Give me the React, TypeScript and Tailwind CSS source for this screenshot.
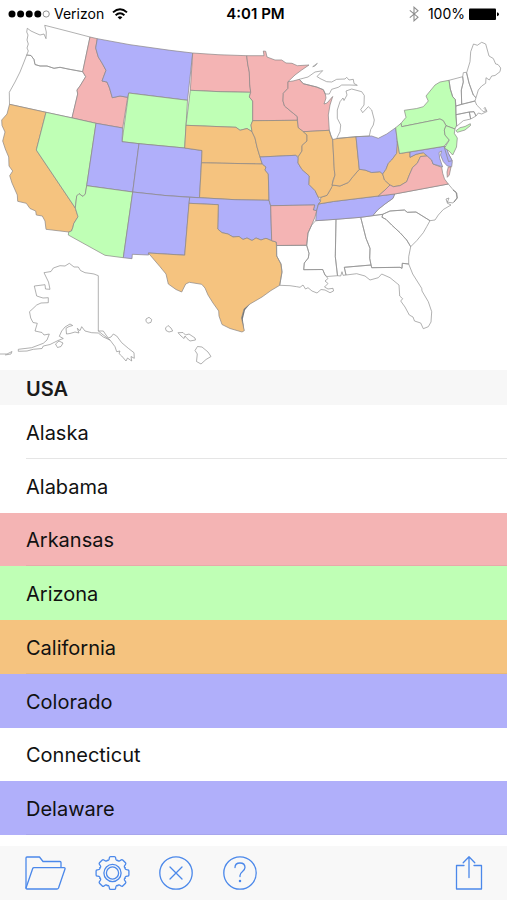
import type { ReactNode } from "react";

const PINK = "#f4b4b4";
const GREEN = "#bfffb5";
const ORANGE = "#f5c37f";
const PURPLE = "#b0affa";

type Shape = { id: string; d: string; fill?: string };

const shapes: Shape[] = [
  { id: "WA", d: "M27.3 28.3L31 31 36 33.3 40 35 44 34 46 38.7 46.3 32 44.7 25.3 67 31 90 37 82.7 71.7 68 69 60 67.3 54 68.3 47 66 40 66 35 64.5 34 59.5 31 55.5 26.7 55 28.3 51 27 48 28.3 44 27 40 28 35 26.7 32Z" },
  { id: "OR", d: "M26.7 55L24 62 20 72 15 82 9.3 92.3 9.5 104.3 46 112.3 72 117.9 77.7 94 77 90 80 86 85.7 76.7 82.7 71.7 68 69 60 67.3 54 68.3 47 66 40 66 35 64.5 34 59.5 31 55.5Z" },
  { id: "ID", fill: PINK, d: "M90 37L97.3 38.7 95.7 48 98.3 57 102 63 106 70.3 102 81 107 82 109.5 88 112.3 97.7 120 96 127.7 97.3 122.7 128 96 123.3 72 117.9 77.7 94 77 90 80 86 85.7 76.7 82.7 71.7Z" },
  { id: "MT", fill: PURPLE, d: "M97.3 38.7L130 44.7 170 50.3 192.7 53 187.5 100.3 128.7 93 127.7 97.3 120 96 112.3 97.7 109.5 88 107 82 102 81 106 70.3 102 63 98.3 57 95.7 48Z" },
  { id: "WY", fill: GREEN, d: "M128.7 93L187.5 100.3 184.7 148 139 143.7 122 141.7Z" },
  { id: "CA", fill: ORANGE, d: "M9.5 104.3L46 112.3 36.3 150 75.3 208 78 216.7 73.7 223.7 73 227 71.5 231 68.7 232 46 229.3 45 221 42.3 216 36.3 215 35.7 211 30 208.5 26.3 203.3 17.7 201.3 17.3 195 12 183 9.7 175.7 12.7 171 9 166 8.7 157 5.3 149 2.7 141 5 132 2 125.5 1.7 120 7 114Z" },
  { id: "NV", fill: GREEN, d: "M46 112.3L72 117.9 96 123.3 86.7 185.7 85.3 194 83 196.5 79 193.7 76.7 196 75.3 208 36.3 150Z" },
  { id: "UT", fill: PURPLE, d: "M96 123.3L122.7 128 122 141.7 139 143.7 132.7 192 86.7 185.7Z" },
  { id: "CO", fill: PURPLE, d: "M139 143.7L184.7 148 202 150.5 199.5 197.7 165 195.5 132.7 192Z" },
  { id: "AZ", fill: GREEN, d: "M86.7 185.7L132.7 192 123.3 257.7 105 255.3 68.3 235 68.7 232 71.5 231 73 227 73.7 223.7 78 216.7 75.3 208 76.7 196 79 193.7 83 196.5 85.3 194Z" },
  { id: "NM", fill: PURPLE, d: "M132.7 192L165 195.5 189.7 197.3 184.7 255.2 148.3 253 148.7 255 132.3 254.3 132 258.7 123.3 257.7Z" },
  { id: "ND", fill: PINK, d: "M192.7 53L218 54.7 246.7 55.7 247.7 64 249.3 72 249.7 84 250.7 92.3 220 91.7 190.3 90.3Z" },
  { id: "SD", fill: GREEN, d: "M190.3 90.3L220 91.7 250.7 92.3 249.3 97 252.7 101 252.7 120.7 251 125 252 131.7 247 128.5 240 130.3 236 127.3 186 125.3Z" },
  { id: "NE", fill: ORANGE, d: "M186 125.3L236 127.3 240 130.3 247 128.5 252 131.7 255 138 257 147 260 157 262.3 164 201.5 162.8 202 150.5 184.7 148Z" },
  { id: "KS", fill: ORANGE, d: "M201.5 162.8L262.3 164 266 167 265 170 268.3 174 269 200.3 235 199.7 199.5 197.7Z" },
  { id: "OK", fill: PURPLE, d: "M189.7 197.3L199.5 197.7 235 199.7 269 200.3 270.7 206 271.7 240.7 266 238.3 261 240 256 238 252 240.5 247 238 243 239.5 239 236.5 233 237 228 234 222 232.7 217.7 229 218.3 204.7 189 203.3Z" },
  { id: "TX", fill: ORANGE, d: "M189 203.3L218.3 204.7 217.7 229 222 232.7 228 234 233 237 239 236.5 243 239.5 247 238 252 240.5 256 238 261 240 266 238.3 271.7 240.7 276.3 242 276.7 256 281 264 282 272 279.7 285.3 271 290.5 262 297 250 304 244 309 241.5 318 244.3 330.7 242 332 230 328.5 222 324.5 219 316 218.7 311 213 303 208 295 205 288 201.7 284.3 189.3 282.3 185.7 284 181.7 292 176 289.5 168.3 284 166 274 160 266.7 148.3 253 184.7 255.2Z" },
  { id: "MN", fill: PINK, d: "M246.7 55.7L264 55.7 263.3 51 265.7 51.3 267 57 275 60 281.7 60 286 63 292 63.3 297.3 65.7 309 65 301.7 70 295 75 288 81.7 288 88.3 283.3 93.3 283 101 284.5 106 293.3 113.3 297.3 116.5 297.3 120.3 252.7 120.7 252.7 101 249.3 97 250.7 92.3 249.7 84 249.3 72 247.7 64Z" },
  { id: "WI", fill: PINK, d: "M288 81.7L293 81 299.3 79.3 303.3 83.7 316.7 87 323.3 89.7 325.3 94 326 98 324 104 327 103 332.7 96.5 330 105 328.3 115 329.3 130.3 303.3 131.7 298 127.5 297.3 116.5 293.3 113.3 284.5 106 283 101 283.3 93.3 288 88.3Z" },
  { id: "IA", fill: ORANGE, d: "M252.7 120.7L297.3 120.3 298 127.5 303.3 131.7 307 135 307 141 302 145.5 302 151 298.3 156.7 295.7 155.3 260 157 257 147 255 138 252 131.7 251 125Z" },
  { id: "MO", fill: PURPLE, d: "M260 157L295.7 155.3 298.3 158 298 163 302 169.5 309.3 176 309 184.5 315 190.5 318.3 197.3 320.5 201.5 318 205 316.7 210.7 313.3 210 314.7 205 270.7 205.7 269 200.3 268.3 174 265 170 266 167 262.3 164Z" },
  { id: "AR", fill: PINK, d: "M270.7 205.7L314.7 205 313.3 210 316.7 210.7 315 217 311.7 225 308 233 306.7 245.3 276.7 245.5 276.3 242 271.7 240.7Z" },
  { id: "LA", d: "M276.7 245.5L306.7 245.3 309 253.3 308.3 258 304.3 263 303.7 269.7 322.7 269.5 325 275 328 278.5 325 281 328 283.5 324.5 287 328 289 333 288.3 333.5 291 330 292.7 325 290 321 289.5 317 293 312 291 308 287.7 305.5 289 303 285 300 287.3 296.7 286.7 290 285.7 279.7 285.3 282 272 281 264 276.7 256Z" },
  { id: "MS", d: "M315.7 220.7L336 219.3 335.3 256.7 337.5 275.7 327 276.5 325 275 322.7 269.5 303.7 269.7 304.3 263 308.3 258 309 253.3 306.7 245.3 308 233 311.7 225Z" },
  { id: "AL", d: "M336 219.3L360.7 217.3 366 238.3 370 248.3 369.7 258.3 371 265 344.3 267.3 346 275 343 275.3 342 271.7 340.7 276 337.5 275.7 335.3 256.7Z" },
  { id: "GA", d: "M360.7 217.3L382.7 214.3 382 217.3 386 219.3 391.7 225 400 232.7 406.7 240 410.7 246.7 408.7 256.7 408.7 264 402.3 263.3 402 268.3 400 267.3 371.7 267.7 369.7 258.3 370 248.3 366 238.3Z" },
  { id: "FL", d: "M344.3 267.3L371 265 371.7 267.7 400 267.3 402 268.3 402.3 263.3 408.7 264 412.7 274 421.7 288.3 422 291 428.3 301.7 431.7 311.7 431 322 428.3 326.7 423.3 328.7 420.7 323 414.5 321 413 317 409.3 315 405 307 400.7 301 402.7 298.7 399.7 296 399 285 390 277.7 381.7 274 378.3 277.7 370 280 365 276 356.7 273.7 346 275Z" },
  { id: "SC", d: "M382.7 214.3L390 211 404.5 210 407.3 212.3 416 212 430 220.7 426.7 226.7 423.3 232.7 416.7 240.7 410.7 246.7 406.7 240 400 232.7 391.7 225 386 219.3 382 217.3Z" },
  { id: "NC", d: "M394.7 194L448.3 184 453.3 190 456 192 457 198 453 203 447 202 446 199 449 198 447 203 451 205 443.3 209.5 438.3 215 435 220 430 220.7 416 212 407.3 212.3 404.5 210 390 211 382.7 214.3 372.7 215.7 378.3 209.3 385 204 393 198.3Z" },
  { id: "TN", fill: PURPLE, d: "M318.5 204L333.3 201.5 378.3 196 394.7 194 393 198.3 385 204 378.3 209.3 372.7 215.7 360.7 217.3 336 219.3 315.7 220.7 316.7 210.7Z" },
  { id: "KY", fill: ORANGE, d: "M318.5 204L320.5 201.5 320.7 197.3 327 195.3 330.7 189 332 185 340 186 348.3 182.5 353 176.5 359.3 169.3 365 170 371.7 172.5 380 171.7 382.7 174 384.5 180 390 185 385 190 378.3 196 333.3 201.5Z" },
  { id: "IL", fill: ORANGE, d: "M303.3 131.7L329.3 130.3 331 136 332.7 140 334.3 170 335 175 332.7 181 332 186.7 327 195.3 320.7 197.3 318.3 197.3 315 190.5 309 184.5 309.3 176 302 169.5 298 163 298.3 156.7 302 151 302 145.5 307 141 307 135Z" },
  { id: "IN", fill: ORANGE, d: "M332.7 139.5L338.3 138.3 356 136.7 359.3 169.3 353 176.5 348.3 182.5 340 186 332 185 335 175 334.3 170Z" },
  { id: "OH", fill: PURPLE, d: "M356 136.7L371.7 136 378.3 138.3 386.7 134 395.7 127.7 397.7 145 396.7 153.3 391.7 160 388.3 163.3 386 169.3 382.7 174 380 171.7 371.7 172.5 365 170 359.3 169.3Z" },
  { id: "WV", fill: ORANGE, d: "M397.3 141L399.5 153.5 410 152 410 157.3 416 154.3 423.3 152.7 427.3 156 420.5 156.5 417.3 163.3 412.7 167.3 409.3 175 406.7 181.7 400 185.7 393.3 186.7 390 185 384.5 180 382.7 174 386 169.3 388.3 163.3 391.7 160 396.7 153.3Z" },
  { id: "VA", fill: PINK, d: "M378.3 196L385 190 390 185 393.3 186.7 400 185.7 406.7 181.7 409.3 175 412.7 167.3 417.3 163.3 420.5 156.5 427.3 156 431.7 160 433 164 441.7 167.3 442.7 173.3 444.5 179 448.3 184 394.7 194Z" },
  { id: "VA-east", fill: PINK, d: "M448.3 167L451 167 449.3 175 447.3 177.3 447 172Z" },
  { id: "MD", fill: PURPLE, d: "M410 152L444 146.3 448.3 153.3 452.3 161.5 451.7 166.7 447.3 166 443.3 161.7 440.5 155 441.5 151 439 152.5 439.7 158.3 442.7 167 440 166 433 164 431.7 160 427.3 156 423.3 152.7 416 154.3 410 157.3Z" },
  { id: "DE", fill: PURPLE, d: "M444 146.3L446.5 147 448.3 153.3 452.3 160.7 448.5 161.5Z" },
  { id: "NY", fill: GREEN, d: "M401 123.3L406 117.3 404.3 110.3 416.7 108.5 423.3 106.7 428.3 101 426 96 435 85 440 82 449 80.3 450.3 89 452.7 96.7 455.3 99.5 456 116.7 456.7 125 455 129 446 125.7 443.3 120.7 440 119 401.7 126.7Z" },
  { id: "LI", fill: GREEN, d: "M456 130.7L460 127.7 465 126.5 470.3 123.7 470.5 125.5 465 130 457.3 132.3Z" },
  { id: "PA", fill: GREEN, d: "M395.7 127.7L401 123.3 401.7 126.7 440 119 443.3 120.7 446 125.7 444.3 130 445 135 449.3 140 444 146.3 399.5 153.5 397.3 141Z" },
  { id: "NJ", fill: GREEN, d: "M446 125.7L455 129 454.3 133.3 457.3 138 456.5 147 452.7 155 449 151 444.5 148 449.3 140 445 135 444.3 130Z" },
  { id: "VT", d: "M449 80.3L462.7 76.7 463.3 82 461.3 90 461.7 104.3 456 106 455.3 99.5 452.7 96.7 450.3 89Z" },
  { id: "NH", d: "M462.7 76.7L463.3 72.7 466.3 72.3 469 83 473.3 95 476 97.7 475 101 461.7 104.3 461.3 90 463.3 82Z" },
  { id: "ME", d: "M466.7 72.7L470 61.7 470.7 51.7 473.5 44 477.3 45.3 481.7 42.3 485.7 44 489 56 493.3 58.5 495.7 64 498 64.5 500.7 68 500 71.7 495 75.5 491.7 76 489.3 80 486 77.7 485.7 83.3 481.7 86 478.3 90 476 97.7 473.3 95 469 83Z" },
  { id: "MA", d: "M456 106L461.7 104.3 475 101 476.7 105 481 109.3 483.3 111.7 486.7 110.7 485 107.3 484 108.3 487 111.5 481.7 114 478.3 113 476 116 474 111.7 469.3 112 456 114.7Z" },
  { id: "CT", d: "M456 114.7L469.3 112 470.7 119 463.3 120.7 456.7 126.3Z" },
  { id: "RI", d: "M469.3 112L474 111.7 476 116 470.7 119Z" },
  { id: "MI", d: "M336.7 138.5L340 131.7 340.7 125 337.3 118.3 337.3 110 340 101.7 343 98 344 100.5 347 95 346 91 351.7 89 361.7 91.7 364.3 95.5 364 105 360.7 109.5 362.7 112.7 368.3 106.7 371.7 110 374.3 120 373.3 125 370.7 129.5 369.3 136 356 136.7Z" },
  { id: "MI-upper", d: "M299.3 79.3L308 77 315 72 322.7 70.7 317 76.5 320 78.5 326.7 81.7 331.7 82 336.7 79.3 345 79 346.7 77.3 349 80 353.3 79.3 354 83.5 357.3 85.3 350 85 341.7 85 338.3 87.3 331.7 89.3 329.3 94 325.3 94 323.3 89.7 316.7 87 303.3 83.7Z" },
  { id: "MI-isle", d: "M312.7 66.7L317.3 63.3 315 66Z" },
  { id: "MI-lake", d: "M329.3 130.3L330.7 135 332.7 139.5" },
  { id: "AK", d: "M98.3 275.7L98.3 331 103.3 331 106 335 108.3 338 111 337 113.3 334 116.7 336 121.7 342.7 128.3 348.3 134 352.7 134.3 358.3 131 356.5 131.7 361 127.5 358 126 361 121.7 356 119 353.5 120 351 116.7 351.7 115 346.7 110 340 103.3 337 98.3 333 91.7 332.7 85 331 81.7 326.7 80 330.7 77.3 328.3 79 333 75 332 70 333.5 66.5 334 66 328.3 69 326.5 72.7 325.5 70 324 65 327 61.7 331 59.3 336.3 63.3 338.5 58 340.5 50 344.5 43.3 346 42 348.5 33.3 349.3 27 351 18.3 351.3 18.3 349.3 31.7 347.7 43.3 343.3 47 340 49.3 334 44 335 42 332.5 35 331 37.3 323.3 33 322.5 30.7 318 29.5 311.7 33 308.5 36.7 305 41 303 48.3 302.7 48.3 297.7 43 298 36.7 296 34.3 286 45 284.7 45.5 289 50 289.3 48.5 282 44 272.7 51 271.5 53.3 268 60 265.7 65 266 69.3 263.3 74 267 78.3 267 80.5 270.5 85 272.7 91 273.5 94 274Z" },
  { id: "AK-kodiak", d: "M55.5 344L59 341 63 343 61 346.5 57.5 347.5Z" },
  { id: "AK-islands", d: "M0 354L7 354 12 351.5 11 354 5 355M98.3 331L102 334 110 340" },
  { id: "HI-kauai", d: "M146 319L149 317.3 151.7 319.5 151 322.3 148 323.3 146 321.5Z" },
  { id: "HI-oahu", d: "M165.5 328L168 325.5 171 328 172.7 331 169 332 166 330.5Z" },
  { id: "HI-maui", d: "M178 332.7L183 332.5 185.5 335 189 334 195 338 195.5 340 190 341 187 338.5 185 336 184 338.5 181 336Z" },
  { id: "HI-big", d: "M197.5 346.5L202 347 208 352 211 356.5 206 359.5 201 364 196.5 361.5 197.3 354 195 350.5Z" },
];

const states = [
  { name: "Alaska", row: "bg-white", line: "border-black/10" },
  { name: "Alabama", row: "bg-white", line: "border-transparent" },
  { name: "Arkansas", row: "bg-[#f4b4b4]", line: "border-black/5" },
  { name: "Arizona", row: "bg-[#bfffb5]", line: "border-transparent" },
  { name: "California", row: "bg-[#f5c37f]", line: "border-black/5" },
  { name: "Colorado", row: "bg-[#b0affa]", line: "border-transparent" },
  { name: "Connecticut", row: "bg-white", line: "border-transparent" },
  { name: "Delaware", row: "bg-[#b0affa]", line: "border-black/5" },
];

function StatusBar() {
  return (
    <header className="grid h-7 grid-cols-[1fr_auto_1fr] items-center px-2 text-sm text-black">
      <div className="flex items-center">
        <svg className="mr-1 h-2 w-[42px]" viewBox="0 0 42 8" aria-hidden="true">
          {[4, 12.6, 21.2, 29.8].map((x) => (
            <circle key={x} cx={x} cy="4" r="3.5" />
          ))}
          <circle cx="38.2" cy="4" r="3.1" fill="none" stroke="#777" strokeWidth="0.8" />
        </svg>
        <span>Verizon</span>
        <svg className="ml-2 h-3 w-4" viewBox="0 0 16 12" fill="none" stroke="#000" strokeWidth="1.9" aria-hidden="true">
          <path d="M1 4.4Q8 -2 15 4.4" />
          <path d="M3.6 7.2Q8 3.2 12.4 7.2" />
          <path d="M8 11.6L5.6 9.2Q8 7.2 10.4 9.2Z" fill="#000" stroke="none" />
        </svg>
      </div>
      <span className="pl-1 text-[15px] font-semibold">4:01 PM</span>
      <div className="flex items-center justify-end">
        <svg className="mr-2 h-4 w-3" viewBox="0 0 12 16" fill="none" stroke="#8c8c8c" strokeWidth="1.1" aria-hidden="true">
          <path d="M1.8 4.4L10 11.2 6 14.8V1.2L10 4.8 1.8 11.6" />
        </svg>
        <span>100%</span>
        <svg className="ml-1 h-3 w-[30px]" viewBox="0 0 30 12" aria-hidden="true">
          <rect x="0" y="0.5" width="27" height="11.5" rx="1" />
          <path d="M28 4.2Q30 4.6 30 6.2T28 8.3Z" />
        </svg>
      </div>
    </header>
  );
}

function UsaMap() {
  return (
    <svg className="block w-full overflow-visible" viewBox="0 28 507 342" role="img" aria-label="USA">
      <g strokeWidth="0.7" strokeLinejoin="round">
        {shapes.map(({ id, d, fill }) => (
          <path key={id} d={d} fill={fill ?? "none"} stroke={fill ? "#8a8585" : "#8f8f8f"} />
        ))}
      </g>
      <path d="M250 304L244 309 241.5 318 244.3 330.7 242.8 319 245 310Z" fill="#777" />
      <path d="M453 190L456.7 193 457.3 198 454 202" fill="none" stroke="#777" strokeWidth="0.8" />
    </svg>
  );
}

function ToolButton({ label, wide, children }: { label: string; wide?: boolean; children: ReactNode }) {
  return (
    <button type="button" aria-label={label} className="shrink-0 cursor-pointer">
      <svg
        className={wide ? "block h-9 w-[42px]" : "block h-9 w-9"}
        viewBox={wide ? "0 0 42 36" : "0 0 36 36"}
        fill="none"
        stroke="#4b88ea"
        strokeWidth="1.3"
        strokeLinejoin="round"
        strokeLinecap="round"
      >
        {children}
      </svg>
    </button>
  );
}

function Toolbar() {
  return (
    <nav className="flex h-[54px] items-center bg-[#f8f8f8] px-6">
      <div className="flex gap-7">
        <ToolButton label="Open" wide>
          <path d="M2 33V3Q2 2 3 2H15.5L19 6.5H36Q37 6.5 37 7.5V12" />
          <path d="M2 33L8.7 13.5Q9 12.7 10 12.7H40Q41.5 12.7 41 14L34.5 33Q34 34 33 34H3Q2 34 2 33Z" />
        </ToolButton>
        <ToolButton label="Settings">
          <g transform="translate(18.5 18)">
            {[0, 45, 90, 135, 180, 225, 270, 315].map((angle) => (
              <path
                key={angle}
                transform={`rotate(${angle})`}
                d="M-5.2 -12.6C-3.4 -12 -3.4 -14 -3.1 -15.4Q-2.9 -16.4 -2 -16.4H2Q2.9 -16.4 3.1 -15.4C3.4 -14 3.4 -12 5.2 -12.6"
              />
            ))}
            <circle r="8.6" />
            <circle r="6.1" />
          </g>
        </ToolButton>
        <ToolButton label="Clear">
          <circle cx="18" cy="18" r="16.2" />
          <path d="M12 12L24 24M24 12L12 24" />
        </ToolButton>
        <ToolButton label="Help">
          <circle cx="18" cy="18" r="16.2" />
          <path d="M13 12.6C13 9.6 15 8 18 8S23 9.8 23 12.6C23 16.2 18 16.6 18 20.4V21.6" />
          <circle cx="18" cy="26" r="0.6" fill="#4b88ea" />
        </ToolButton>
      </div>
      <div className="-mr-1 ml-auto flex">
        <ToolButton label="Share">
          <path d="M13 10.5H5.5V34H30.5V10.5H23M18 22.5V1.8M12.2 7.8L18 1.8 23.8 7.8" />
        </ToolButton>
      </div>
    </nav>
  );
}

export default function App() {
  return (
    <div className="flex min-h-screen flex-col bg-white font-[Inter,'Liberation_Sans',sans-serif]">
      <StatusBar />
      <UsaMap />
      <main className="flex grow flex-col">
        <h1 className="flex h-[35px] items-center bg-[#f7f7f7] pt-0.5 pl-[26px] text-xl font-semibold text-[#1a1a1a]">USA</h1>
        <ul className="flex grow flex-col pb-[11px] text-xl text-[#111]">
          {states.map(({ name, row, line }) => (
            <li key={name} className={`flex min-h-12 flex-1 flex-col pl-[26px] ${row}`}>
              <div className={`flex grow items-center border-b pt-[3px] ${line}`}>{name}</div>
            </li>
          ))}
        </ul>
      </main>
      <Toolbar />
    </div>
  );
}
